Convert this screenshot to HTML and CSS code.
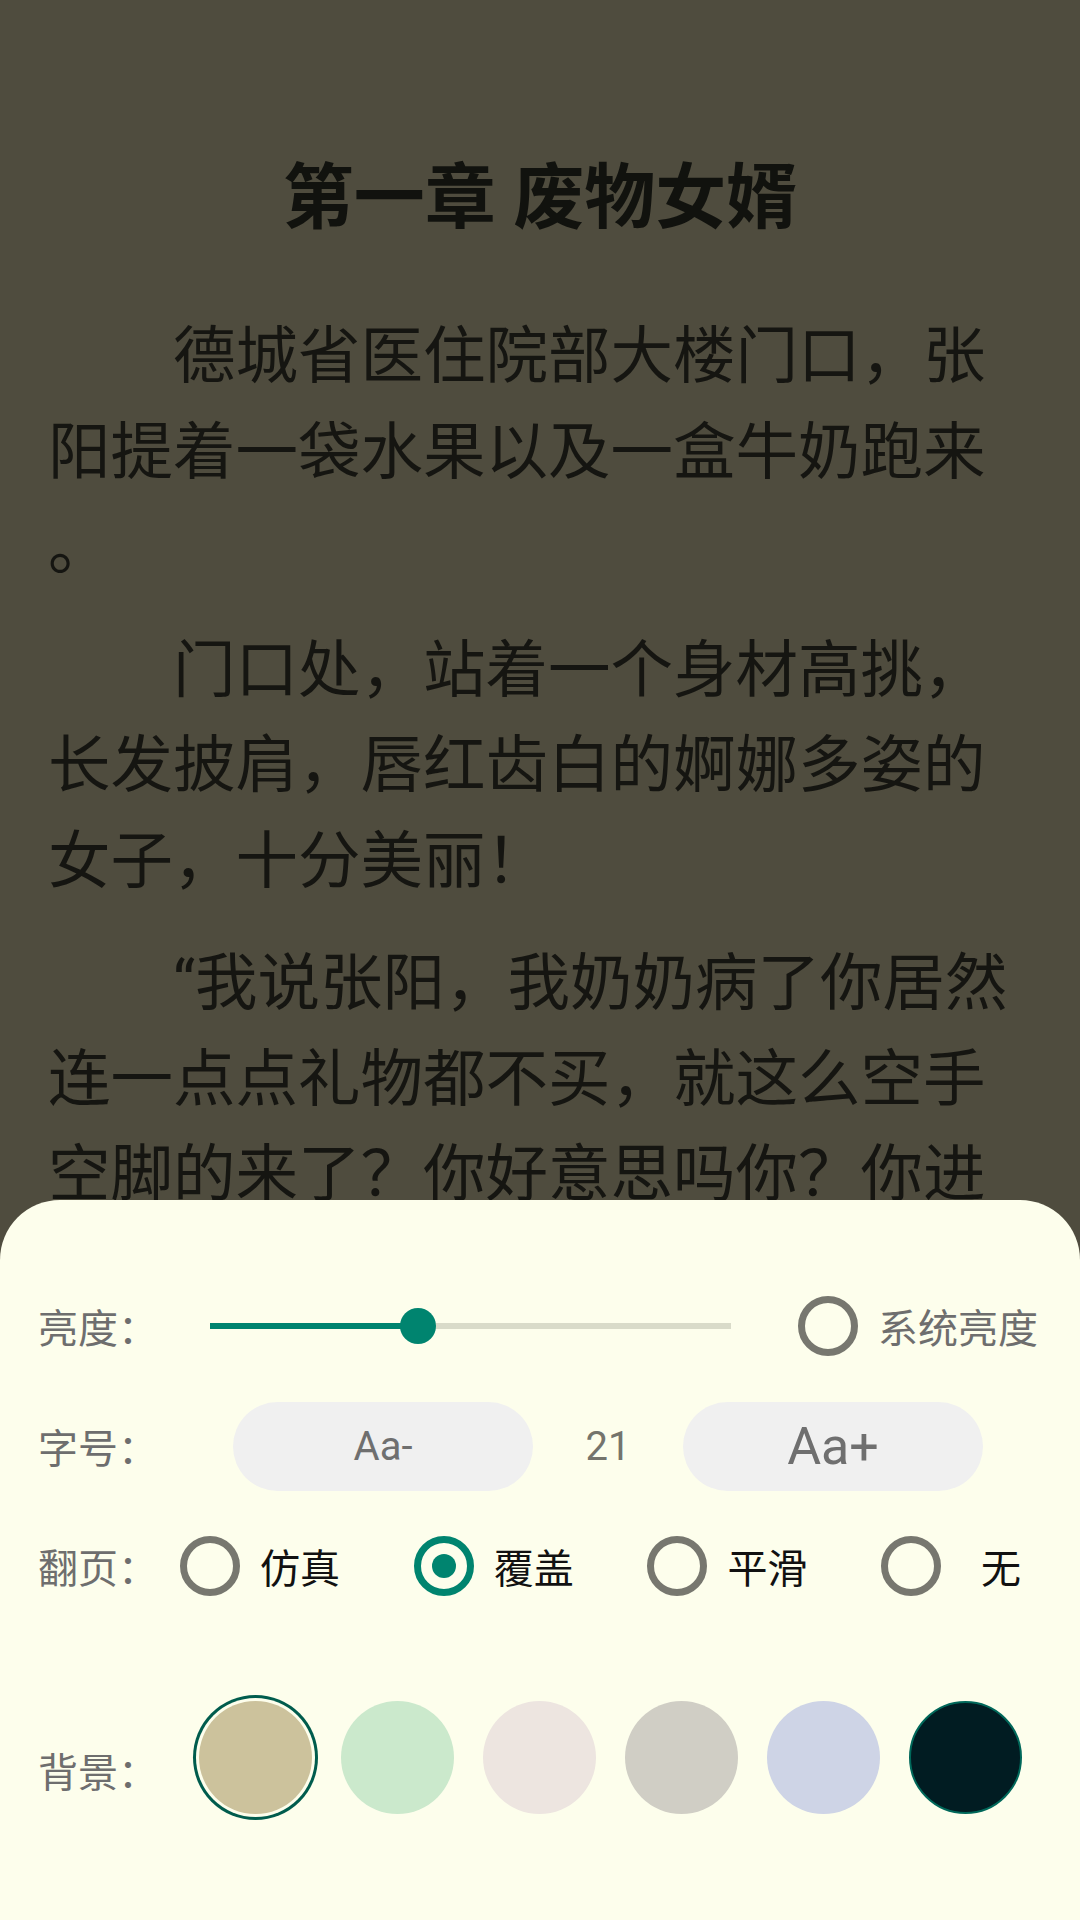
FILE: index.html
```html
<!DOCTYPE html>
<html lang="zh-CN">
<head>
    <meta charset="UTF-8">
    <meta name="viewport" content="width=device-width, initial-scale=1.0">
    <title>第一章 废物女婿</title>
    <link rel="stylesheet" href="styles.css">
</head>
<body>
    <div class="reader">
        <h1 class="chapter-title">第一章 废物女婿</h1>
        <div class="chapter-text">
            <p>德城省医住院部大楼门口，张阳提着一袋水果以及一盒牛奶跑来。</p>
            <p>门口处，站着一个身材高挑，长发披肩，唇红齿白的婀娜多姿的女子，十分美丽！</p>
            <p>“我说张阳，我奶奶病了你居然连一点点礼物都不买，就这么空手空脚的来了？你好意思吗你？你进</p>
        </div>
    </div>

    <div class="settings">
        <div class="row">
            <span class="label">亮度：</span>
            <div class="slider">
                <div class="slider-fill" style="width: 40%"></div>
                <div class="slider-thumb" style="left: 40%"></div>
            </div>
            <div class="radio system">
                <span class="radio-dot"></span>
                <span class="radio-text">系统亮度</span>
            </div>
        </div>

        <div class="row">
            <span class="label">字号：</span>
            <div class="size-btn minus">Aa-</div>
            <div class="size-value">21</div>
            <div class="size-btn plus">Aa+</div>
        </div>

        <div class="row">
            <span class="label">翻页：</span>
            <div class="page-modes">
                <div class="radio">
                    <span class="radio-dot"></span>
                    <span class="radio-text">仿真</span>
                </div>
                <div class="radio checked">
                    <span class="radio-dot"></span>
                    <span class="radio-text">覆盖</span>
                </div>
                <div class="radio">
                    <span class="radio-dot"></span>
                    <span class="radio-text">平滑</span>
                </div>
                <div class="radio">
                    <span class="radio-dot"></span>
                    <span class="radio-text">无</span>
                </div>
            </div>
        </div>

        <div class="row backgrounds">
            <span class="label">背景：</span>
            <div class="swatches">
                <span class="swatch selected" style="background: #ccc29c"></span>
                <span class="swatch" style="background: #cbe9cc"></span>
                <span class="swatch" style="background: #ede5e0"></span>
                <span class="swatch" style="background: #d0cec5"></span>
                <span class="swatch" style="background: #ced4e6"></span>
                <span class="swatch dark" style="background: #011c22"></span>
            </div>
        </div>
    </div>
</body>
</html>
```

FILE: styles.css
```css
body {
    margin: 0;
    width: 1080px;
    height: 1920px;
    overflow: hidden;
    position: relative;
    background-color: #4f4c3e;
    font-family: Roboto, "Noto Sans CJK SC", sans-serif;
}

.reader {
    height: 1200px;
    box-sizing: border-box;
    overflow: hidden;
    padding: 148px 48px 0;
}

.chapter-title {
    margin: 0;
    font-size: 71px;
    line-height: 100px;
    font-weight: 700;
    text-align: center;
    color: #11120e;
}

.chapter-text {
    margin-top: 61px;
    font-size: 62.5px;
    line-height: 95.5px;
    color: #151511;
    line-break: anywhere;
}

.chapter-text p {
    margin: 0 0 27px;
    text-indent: 2em;
}

/* bottom sheet */
.settings {
    position: absolute;
    top: 1200px;
    left: 0;
    right: 0;
    bottom: 0;
    padding: 66px 0 0 38px;
    background-color: #fdfeec;
    border-radius: 60px 60px 0 0;
    font-family: "Noto Sans CJK SC", sans-serif;
}

.row {
    display: flex;
    align-items: center;
    height: 120px;
}

.label {
    flex: none;
    width: 142px;
    font-size: 40px;
    color: #6e6e6e;
}

.slider {
    position: relative;
    width: 521px;
    height: 6px;
    margin-left: 30px;
    background-color: #d9dbc9;
}

.slider-fill {
    height: 100%;
    background-color: #00846f;
}

.slider-thumb {
    position: absolute;
    top: 50%;
    width: 36px;
    height: 36px;
    margin: -18px 0 0 -18px;
    border-radius: 50%;
    background-color: #00846f;
}

.radio {
    display: flex;
    align-items: center;
}

.radio-dot {
    flex: none;
    display: flex;
    align-items: center;
    justify-content: center;
    width: 60px;
    height: 60px;
    box-sizing: border-box;
    border: 7px solid #77776f;
    border-radius: 50%;
}

.radio.checked .radio-dot {
    border-color: #00846f;
}

.radio.checked .radio-dot::after {
    content: "";
    width: 24px;
    height: 24px;
    border-radius: 50%;
    background-color: #00846f;
}

.system {
    margin-left: 67px;
}

.system .radio-text {
    margin-left: 20px;
    font-size: 40px;
    color: #6e6e6e;
}

.size-btn {
    display: flex;
    align-items: center;
    justify-content: center;
    width: 300px;
    height: 89px;
    border-radius: 45px;
    background-color: #f0f0f0;
    font-family: Roboto, sans-serif;
    color: #6f6f6f;
}

.size-btn.minus {
    margin-left: 53px;
    font-size: 40px;
}

.size-btn.plus {
    font-size: 52px;
}

.size-value {
    width: 150px;
    text-align: center;
    font-family: Roboto, sans-serif;
    font-size: 40px;
    color: #74746c;
}

.page-modes {
    display: flex;
    gap: 53.7px;
}

.page-modes .radio {
    width: 180px;
}

.page-modes .radio-text {
    flex: 1;
    text-align: center;
    font-size: 40px;
    color: #111;
}

.backgrounds {
    margin-top: 71px;
}

.backgrounds .label {
    margin-top: 26px;
}

.swatches {
    display: flex;
    gap: 29px;
    margin-left: 18.5px;
}

.swatch {
    width: 113px;
    height: 113px;
    border-radius: 50%;
}

.swatch.selected {
    box-shadow: 0 0 0 3px #fdfeec, 0 0 0 6px #005c4d;
}

.swatch.dark {
    box-sizing: border-box;
    border: 2px solid #00685a;
}
```
